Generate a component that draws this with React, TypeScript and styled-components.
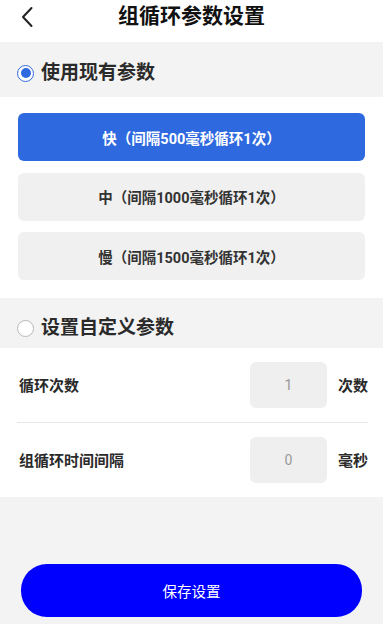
import React, { useState } from "react";
import styled, { createGlobalStyle } from "styled-components";

const Global = createGlobalStyle`
  html, body { margin: 0; padding: 0; background: #f3f3f3; }
  body { font-family: "Roboto", "Noto Sans CJK SC", "Noto Sans", sans-serif; }
  * { box-sizing: border-box; }
`;

const Page = styled.div`
  width: 383px;
  height: 624px;
  background: #f3f3f3;
  display: flex;
  flex-direction: column;
  overflow: hidden;
`;

const Header = styled.div`
  height: 42px;
  background: #fff;
  display: flex;
  align-items: center;
  justify-content: center;
  position: relative;
`;

const BackButton = styled.div`
  position: absolute;
  left: 18px;
  top: 6px;
  width: 18px;
  height: 22px;
  display: flex;
  align-items: center;
  justify-content: center;
`;

const Title = styled.div`
  font-size: 21px;
  font-weight: 700;
  color: #111;
  line-height: 28px;
  margin-top: -10px;
`;

const SectionHead = styled.div<{ $top: number; $bottom: number }>`
  display: flex;
  align-items: center;
  gap: 7px;
  padding: ${(p) => p.$top}px 17px ${(p) => p.$bottom}px 17px;
  background: #f3f3f3;
`;

const Radio = styled.div<{ $on: boolean }>`
  flex-shrink: 0;
  width: 17px;
  height: 17px;
  border-radius: 50%;
  border: 1.5px solid ${(p) => (p.$on ? "#2f69e0" : "#b8b8b8")};
  background: #fff;
  display: flex;
  align-items: center;
  justify-content: center;
  &::after {
    content: "";
    width: 10px;
    height: 10px;
    border-radius: 50%;
    background: ${(p) => (p.$on ? "#2f69e0" : "transparent")};
  }
`;

const SectionTitle = styled.div`
  font-size: 19px;
  font-weight: 700;
  color: #2a2a2a;
  line-height: 24px;
`;

const OptionList = styled.div`
  background: #fff;
  padding: 16px 18px 18px 18px;
  display: flex;
  flex-direction: column;
  gap: 11.5px;
`;

const Option = styled.div<{ $active: boolean }>`
  height: 48px;
  border-radius: 6px;
  background: ${(p) => (p.$active ? "#2f69e0" : "#f0f0f0")};
  color: ${(p) => (p.$active ? "#fff" : "#333")};
  font-size: 14.5px;
  font-weight: 700;
  display: flex;
  align-items: center;
  justify-content: center;
`;

const Form = styled.div`
  background: #fff;
  padding: 0 15px 0 17px;
  display: flex;
  flex-direction: column;
`;

const Row = styled.div<{ $divider?: boolean }>`
  height: 74.5px;
  display: flex;
  align-items: center;
  border-bottom: ${(p) => (p.$divider ? "1px solid #e6e6e6" : "none")};
`;

const Label = styled.div`
  flex: 1;
  font-size: 15px;
  font-weight: 700;
  color: #2a2a2a;
  padding-left: 2px;
`;

const NumberBox = styled.div`
  width: 77px;
  height: 46px;
  border-radius: 6px;
  background: #efefef;
  color: #999;
  font-size: 14px;
  display: flex;
  align-items: center;
  justify-content: center;
`;

const Unit = styled.div`
  flex-shrink: 0;
  white-space: nowrap;
  padding-left: 11px;
  font-size: 15px;
  font-weight: 700;
  color: #2a2a2a;
`;

const Footer = styled.div`
  flex: 1;
  padding: 67px 21px 0 21px;
`;

const SaveButton = styled.div`
  height: 53px;
  border-radius: 26px;
  background: #0000ff;
  color: #fff;
  font-size: 14.5px;
  display: flex;
  align-items: center;
  justify-content: center;
`;

const options = [
  "快（间隔500毫秒循环1次）",
  "中（间隔1000毫秒循环1次）",
  "慢（间隔1500毫秒循环1次）",
];

export default function App() {
  const [active] = useState(0);
  return (
    <>
      <Global />
      <Page>
        <Header>
          <BackButton>
            <svg width="14" height="22" viewBox="0 0 14 22">
              <path d="M11.5 2 L3 11 L11.5 20" fill="none" stroke="#222" strokeWidth="2" strokeLinecap="round" strokeLinejoin="round" />
            </svg>
          </BackButton>
          <Title>组循环参数设置</Title>
        </Header>
        <SectionHead $top={19} $bottom={12}>
          <Radio $on={true} />
          <SectionTitle>使用现有参数</SectionTitle>
        </SectionHead>
        <OptionList>
          {options.map((o, i) => (
            <Option key={o} $active={i === active}>
              {o}
            </Option>
          ))}
        </OptionList>
        <SectionHead $top={18} $bottom={8}>
          <Radio $on={false} />
          <SectionTitle>设置自定义参数</SectionTitle>
        </SectionHead>
        <Form>
          <Row $divider>
            <Label>循环次数</Label>
            <NumberBox>1</NumberBox>
            <Unit>次数</Unit>
          </Row>
          <Row>
            <Label>组循环时间间隔</Label>
            <NumberBox>0</NumberBox>
            <Unit>毫秒</Unit>
          </Row>
        </Form>
        <Footer>
          <SaveButton>保存设置</SaveButton>
        </Footer>
      </Page>
    </>
  );
}
